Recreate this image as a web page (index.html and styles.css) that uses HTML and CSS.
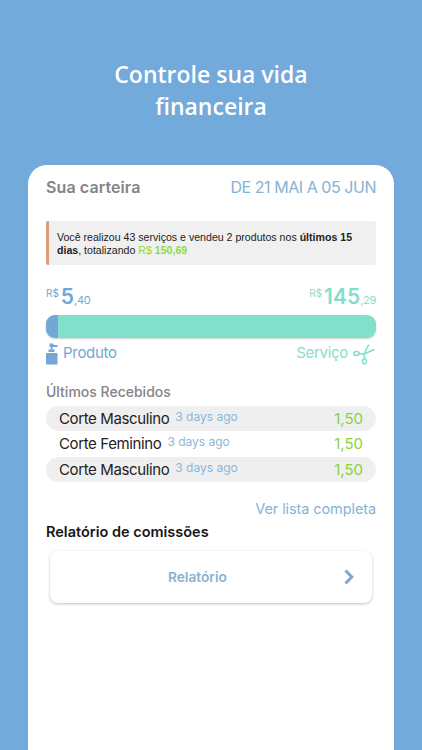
FILE: index.html
```html
<!DOCTYPE html>
<html lang="pt-BR">

<head>
    <meta charset="UTF-8">
    <meta name="viewport" content="width=device-width, initial-scale=1.0">
    <title>Sua carteira</title>
    <link rel="stylesheet" href="styles.css">
</head>

<body>
    <h1>Controle sua vida<br>financeira</h1>

    <main class="card">
        <div class="card-header">
            <h2>Sua carteira</h2>
            <span class="period">DE 21 MAI A 05 JUN</span>
        </div>

        <p class="notice">Você realizou 43 serviços e vendeu 2 produtos nos <b>últimos 15<br>dias</b>, totalizando <span class="green">R$ <b>150,69</b></span></p>

        <!-- totals -->
        <div class="totals">
            <div class="amount product"><small class="currency">R$</small><strong>5</strong><small class="cents">,40</small></div>
            <div class="amount service"><small class="currency">R$</small><strong>145</strong><small class="cents">,29</small></div>
        </div>
        <div class="bar">
            <div class="bar-product"></div>
        </div>
        <div class="labels">
            <div class="label product">
                <svg class="bottle" width="12" height="22" viewBox="0 0 12 22" fill="currentColor">
                    <path d="M1 10h9.500q1 0 1 1v9.500q0 1-1 1H1q-1 0-1-1V11q0-1 1-1z" />
                    <path d="M2.500 6.500h6V9h-6z" />
                    <path d="M4.800 3h1.800v4H4.800z" />
                    <path d="M3.500 0.500h3.500L8 2h3.500v2H3.500z" />
                </svg>
                <span>Produto</span>
            </div>
            <div class="label service">
                <span>Serviço</span>
                <svg class="scissors" width="23" height="22" viewBox="0 0 23 22" fill="none" stroke="currentColor" stroke-width="1.500" stroke-linecap="round">
                    <ellipse cx="3.500" cy="10.500" rx="2.700" ry="1.900" />
                    <ellipse cx="11.500" cy="18.300" rx="2" ry="2.600" />
                    <path d="M6.200 10.500L11 11.300L21 6.500" />
                    <path d="M11.600 15.500L11 11.300L15.500 2" />
                </svg>
            </div>
        </div>

        <!-- last payments -->
        <h3 class="section-title">Últimos Recebidos</h3>
        <ul class="list">
            <li><span class="name">Corte Masculino</span><span class="time">3 days ago</span><span class="price">1,50</span></li>
            <li><span class="name">Corte Feminino</span><span class="time">3 days ago</span><span class="price">1,50</span></li>
            <li><span class="name">Corte Masculino</span><span class="time">3 days ago</span><span class="price">1,50</span></li>
        </ul>
        <a class="see-all">Ver lista completa</a>

        <h3 class="report-title">Relatório de comissões</h3>
        <button class="report-btn">
            <span>Relatório</span>
            <svg class="chevron" width="10" height="16" viewBox="0 0 10 16" fill="none" stroke="currentColor" stroke-width="3">
                <path d="M1.500 1.500L7.800 8L1.500 14.500" />
            </svg>
        </button>
    </main>
</body>

</html>
```

FILE: styles.css
```css
* {
    box-sizing: border-box;
}

body {
    margin: 0;
    height: 750px;
    overflow: hidden;
    display: flex;
    flex-direction: column;
    background-color: #72aadb;
    font-family: Inter, "Liberation Sans", sans-serif;
}

h1, h2, h3, p, ul {
    margin: 0;
    padding: 0;
}

h1 {
    height: 165px;
    padding-top: 58px;
    text-align: center;
    color: #fff;
    font-family: "Open Sans", sans-serif;
    font-size: 23px;
    font-weight: 600;
    line-height: 32px;
}

.card {
    flex: 1;
    margin: 0 28px;
    padding: 12px 18px 0;
    background-color: #fff;
    border-radius: 19px 19px 0 0;
}

.card-header {
    display: flex;
    justify-content: space-between;
    height: 44px;
    line-height: 21px;
}

h2 {
    color: #858384;
    font-size: 16px;
    font-weight: 600;
    letter-spacing: 0.1px;
}

.period {
    color: #85b3d4;
    font-size: 16px;
    letter-spacing: -0.450px;
}

.notice {
    height: 44px;
    padding: 10px 0 0 8px;
    border-left: 3px solid #e09a78;
    border-radius: 2px;
    background-color: #f0f0f0;
    color: #222;
    font-family: "Liberation Sans", Arial, sans-serif;
    font-size: 10.600px;
    line-height: 13px;
    white-space: nowrap;
}

.green {
    color: #8fd943;
}

.product {
    color: #72a7d8;
}

.service {
    color: #82dfca;
}

.totals {
    display: flex;
    justify-content: space-between;
    height: 50px;
    padding-top: 19px;
}

.amount {
    display: flex;
    height: 25px;
    line-height: 25px;
}

.amount strong {
    font-size: 21px;
    font-weight: 600;
}

.currency {
    font-size: 10px;
    line-height: 19px;
    margin-right: 2px;
}

.cents {
    font-size: 11px;
    line-height: 33px;
    letter-spacing: -0.3px;
}

.bar {
    height: 23px;
    border-radius: 9px;
    overflow: hidden;
    background-color: #82dfca;
    box-shadow: 0 1px 2px rgba(0, 0, 0, 0.2);
}

.bar-product {
    width: 12px;
    height: 100%;
    background-color: #72a7d8;
}

.labels {
    display: flex;
    justify-content: space-between;
    height: 43px;
    padding-top: 5px;
}

.label {
    display: flex;
    gap: 5px;
    height: 22px;
    font-size: 15px;
    line-height: 19px;
    letter-spacing: -0.3px;
}

.section-title {
    height: 25px;
    color: #858384;
    font-size: 14px;
    font-weight: 500;
    line-height: 22px;
}

.list {
    list-style: none;
}

.list li {
    display: flex;
    height: 25.300px;
    padding: 0 13px;
    border-radius: 13px;
    line-height: 25px;
}

.list li:nth-child(odd) {
    background-color: #efefef;
}

.name {
    color: #222;
    font-size: 15px;
    letter-spacing: -0.380px;
}

.time {
    margin-left: 6px;
    color: #8ab7db;
    font-size: 12px;
    line-height: 22px;
}

.price {
    margin-left: auto;
    color: #86d33f;
    font-size: 15px;
}

.see-all {
    display: block;
    margin-top: 17px;
    color: #85b3d4;
    font-size: 14.500px;
    line-height: 20px;
    letter-spacing: -0.1px;
    text-align: right;
}

.report-title {
    margin-top: 3px;
    color: #161616;
    font-size: 14.500px;
    font-weight: 600;
    line-height: 20px;
}

.report-btn {
    display: flex;
    justify-content: space-between;
    align-items: center;
    width: 322px;
    height: 52px;
    margin: 9px 4px 0;
    padding: 0 18px 0 118px;
    border: none;
    border-radius: 8px;
    background-color: #fff;
    box-shadow: 0 1px 3px rgba(0, 0, 0, 0.25);
    color: #85b3d4;
    font-family: inherit;
    font-size: 13.700px;
    font-weight: 600;
}

.chevron {
    color: #7aa7cf;
}
```
